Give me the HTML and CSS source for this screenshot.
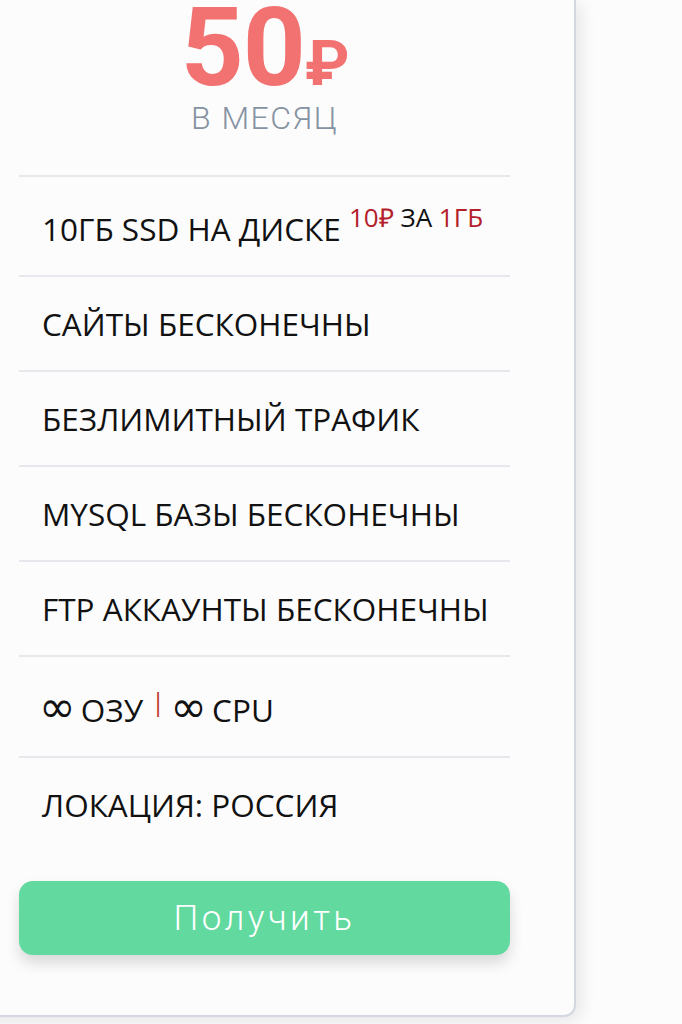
FILE: index.html
```html
<!DOCTYPE html>
<html lang="ru">
<head>
  <meta charset="UTF-8">
  <title>Тариф 50₽</title>
  <link rel="stylesheet" href="styles.css">
</head>
<body>
  <div class="plan-card">
    <div class="price">
      <div class="price-value">50<span class="currency">₽</span></div>
      <div class="price-period">в месяц</div>
    </div>
    <ul class="features">
      <li>10ГБ SSD на диске <sup class="note"><span class="red">10₽</span> за <span class="red">1ГБ</span></sup></li>
      <li>Сайты бесконечны</li>
      <li>Безлимитный трафик</li>
      <li>MySQL базы бесконечны</li>
      <li>FTP аккаунты бесконечны</li>
      <li><span class="inf">∞</span> ОЗУ <sup class="sep">|</sup> <span class="inf">∞</span> CPU</li>
      <li>Локация: Россия</li>
    </ul>
    <button class="get-btn">Получить</button>
  </div>
</body>
</html>
```

FILE: styles.css
```css
* { box-sizing: border-box; margin:0; padding:0; }
html, body { height:100%; overflow:hidden; }
body { background:#fcfcfc; font-family:'Open Sans',sans-serif; color:#111; }

.plan-card {
  width:621px; margin-left:-45px; padding:0 64px 60px;
  background:#fcfcfc; border-right:2px solid #d3d8e0; border-bottom:2px solid #d3d8e0;
  border-radius:0 0 12px 0; box-shadow:5px 4px 16px rgba(0,0,0,0.09);
}

.price { text-align:center; padding-bottom:40px; }
.price-value { font-family:Roboto,sans-serif; font-weight:700; font-size:110px; line-height:96px; color:#f27171; letter-spacing:-1px; }
.currency { font-size:63px; }
.price-period {
  font-family:Roboto,sans-serif; font-weight:300; font-size:32px; line-height:34px;
  letter-spacing:1.5px; color:#8592a2; text-transform:uppercase; margin-top:-11px;
}

.features { list-style:none; }
.features li {
  border-top:2px solid #e6e8ee; padding:26px 0 26px 23px;
  font-size:31.5px; line-height:41px; text-transform:uppercase;
}
.note { font-size:26px; vertical-align:14px; line-height:29px; }
.red { color:#b3202a; }
.inf { font-family:'DejaVu Sans',sans-serif; font-size:44px; line-height:0; margin:0 -3px; }
.sep { color:#c0392b; font-size:25px; vertical-align:11px; line-height:37px; }

.get-btn {
  display:block; width:100%; height:74px; margin-top:30px;
  background:#61d99f; border:none; border-radius:14px; color:#fff;
  font-family:Roboto,sans-serif; font-weight:300; font-size:35px; letter-spacing:3.5px;
  box-shadow:0 8px 14px rgba(0,0,0,0.14); cursor:pointer;
}
```
